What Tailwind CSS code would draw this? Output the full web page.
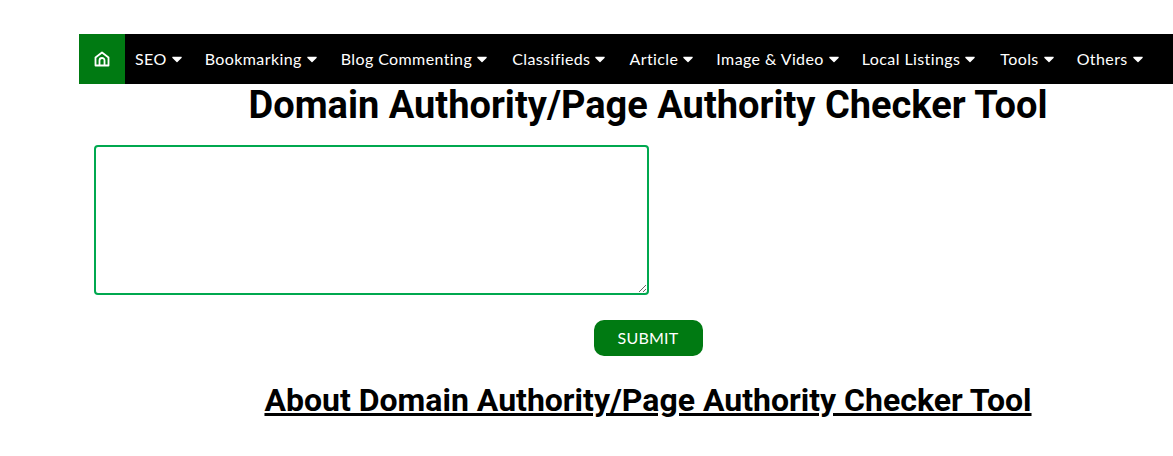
<!DOCTYPE html>
<html lang="en">

<head>
    <meta charset="UTF-8">
    <meta name="viewport"
          content="width=device-width, initial-scale=1.0">
    <title>Domain Authority/Page Authority Checker Tool</title>
    <script src="https://cdn.jsdelivr.net/npm/@tailwindcss/browser@4"></script>
</head>

<body class="bg-white overflow-hidden">
    <div class="w-[1138px] ml-[79px] pt-[34px]">
        <nav class="flex items-center h-[50px] bg-black text-white font-['Lato',sans-serif] text-[16px] tracking-[0.4px] whitespace-nowrap">
            <a class="flex items-center justify-center w-[46px] h-full bg-[#007a12]">
                <svg class="w-[16px] h-[16px]" viewBox="0 0 16 16" fill="none" stroke="white" stroke-width="1.8" stroke-linejoin="round">
                    <path d="M1.5 6.5 L8 1.5 L14.5 6.5 V14.5 H1.5 Z" />
                    <path d="M5.5 14.5 V9.5 A2.5 2.5 0 0 1 10.5 9.5 V14.5" />
                </svg>
            </a>
            <div class="flex items-center">
                <a class="flex items-center gap-[5px] pl-[10px] pr-[11px]">SEO <svg class="w-[10px] h-[7px]" viewBox="0 0 11 7" fill="white"><path d="M1 .5h9c.7 0 1 .8.5 1.3L6 6.3a.7.7 0 0 1-1 0L.5 1.8C0 1.3.3.5 1 .5z" /></svg></a>
                <a class="flex items-center gap-[5px] pl-[12px] pr-[11px]">Bookmarking <svg class="w-[10px] h-[7px]" viewBox="0 0 11 7" fill="white"><path d="M1 .5h9c.7 0 1 .8.5 1.3L6 6.3a.7.7 0 0 1-1 0L.5 1.8C0 1.3.3.5 1 .5z" /></svg></a>
                <a class="flex items-center gap-[5px] pl-[13px] pr-[11px]">Blog Commenting <svg class="w-[10px] h-[7px]" viewBox="0 0 11 7" fill="white"><path d="M1 .5h9c.7 0 1 .8.5 1.3L6 6.3a.7.7 0 0 1-1 0L.5 1.8C0 1.3.3.5 1 .5z" /></svg></a>
                <a class="flex items-center gap-[5px] pl-[14px] pr-[11px]">Classifieds <svg class="w-[10px] h-[7px]" viewBox="0 0 11 7" fill="white"><path d="M1 .5h9c.7 0 1 .8.5 1.3L6 6.3a.7.7 0 0 1-1 0L.5 1.8C0 1.3.3.5 1 .5z" /></svg></a>
                <a class="flex items-center gap-[5px] pl-[13px] pr-[11px]">Article <svg class="w-[10px] h-[7px]" viewBox="0 0 11 7" fill="white"><path d="M1 .5h9c.7 0 1 .8.5 1.3L6 6.3a.7.7 0 0 1-1 0L.5 1.8C0 1.3.3.5 1 .5z" /></svg></a>
                <a class="flex items-center gap-[5px] pl-[12px] pr-[11px]">Image &amp; Video <svg class="w-[10px] h-[7px]" viewBox="0 0 11 7" fill="white"><path d="M1 .5h9c.7 0 1 .8.5 1.3L6 6.3a.7.7 0 0 1-1 0L.5 1.8C0 1.3.3.5 1 .5z" /></svg></a>
                <a class="flex items-center gap-[5px] pl-[12px] pr-[11px]">Local Listings <svg class="w-[10px] h-[7px]" viewBox="0 0 11 7" fill="white"><path d="M1 .5h9c.7 0 1 .8.5 1.3L6 6.3a.7.7 0 0 1-1 0L.5 1.8C0 1.3.3.5 1 .5z" /></svg></a>
                <a class="flex items-center gap-[5px] pl-[14px] pr-[11px]">Tools <svg class="w-[10px] h-[7px]" viewBox="0 0 11 7" fill="white"><path d="M1 .5h9c.7 0 1 .8.5 1.3L6 6.3a.7.7 0 0 1-1 0L.5 1.8C0 1.3.3.5 1 .5z" /></svg></a>
                <a class="flex items-center gap-[5px] pl-[12px] pr-[11px]">Others <svg class="w-[10px] h-[7px]" viewBox="0 0 11 7" fill="white"><path d="M1 .5h9c.7 0 1 .8.5 1.3L6 6.3a.7.7 0 0 1-1 0L.5 1.8C0 1.3.3.5 1 .5z" /></svg></a>
            </div>
        </nav>

        <h1 class="text-center text-black font-['Roboto',sans-serif] font-bold text-[38px] leading-[40px] mt-[1px]">Domain Authority/Page Authority Checker Tool</h1>

        <div class="pl-[15px] mt-[20px]">
            <textarea class="block w-[555px] h-[150px] bg-white border-2 border-[#00a84f] rounded-[4px] outline-none"></textarea>
        </div>

        <div class="flex justify-center mt-[25px]">
            <button class="w-[109px] h-[36px] bg-[#007a12] text-white rounded-[10px] font-['Lato',sans-serif] text-[16px] tracking-[0.2px]">SUBMIT</button>
        </div>

        <h2 class="text-center text-black underline font-['Roboto',sans-serif] font-bold text-[32px] leading-[36px] mt-[26px]">About Domain Authority/Page Authority Checker Tool</h2>
    </div>
</body>

</html>
